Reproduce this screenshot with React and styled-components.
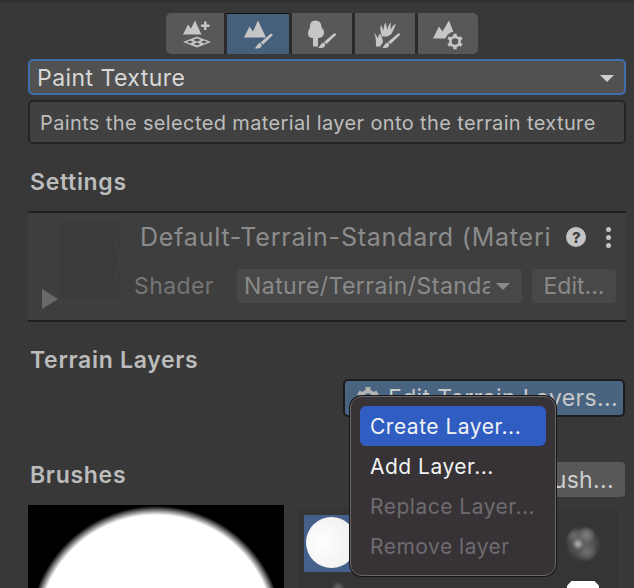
import React from 'react';
import styled, { createGlobalStyle } from 'styled-components';

const Global = createGlobalStyle`
  html, body {
    margin: 0;
    padding: 0;
    height: 588px;
    overflow: hidden;
    background: #383838;
  }
`;

const Page = styled.div`
  position: relative;
  width: 634px;
  height: 588px;
  overflow: hidden;
  box-sizing: border-box;
  padding: 13px 8px 0 28px;
  background: #383838;
  border-top: 2px solid #303030;
  font-family: Inter, "Liberation Sans", sans-serif;
  color: #c4c4c4;
`;

const Toolbar = styled.div`
  display: flex;
  width: 312px;
  height: 41px;
  margin: -2px 0 0 138px;
  gap: 3px;
  border-radius: 5px;
  background: #2a2a2a;
`;

const ToolButton = styled.div`
  flex: ${props => props.$grow} 0 0;
  display: flex;
  align-items: center;
  justify-content: center;
  box-sizing: border-box;
  background: ${props => (props.$active ? '#46607c' : '#585858')};
  border-top: ${props => (props.$active ? '1px solid #111' : '0')};
  border-radius: ${props => props.$radius || '0'};
`;

const Select = styled.div`
  display: flex;
  align-items: center;
  justify-content: space-between;
  box-sizing: border-box;
  height: 36px;
  margin-top: 5px;
  padding: 2px 10px 0 7px;
  border: 2px solid #3d6faf;
  border-radius: 5px;
  background: #515151;
  color: #d8d8d8;
  font-size: 23px;
  letter-spacing: 0.45px;
  line-height: 1;
`;

const Caret = styled.span`
  display: block;
  width: 0;
  height: 0;
  border-left: ${props => props.$size}px solid transparent;
  border-right: ${props => props.$size}px solid transparent;
  border-top: ${props => props.$size}px solid ${props => props.$color};
`;

const HelpBox = styled.div`
  display: flex;
  align-items: center;
  box-sizing: border-box;
  height: 44px;
  margin-top: 5px;
  padding: 2px 10px 0;
  border: 2px solid #242424;
  border-radius: 5px;
  background: #414141;
  font-size: 20px;
  letter-spacing: 0.37px;
  color: #bdbdbd;
  white-space: nowrap;
`;

const SectionTitle = styled.div`
  margin-top: ${props => props.$top}px;
  margin-left: 2px;
  height: 28px;
  line-height: 28px;
  font-size: 23px;
  font-weight: 600;
  letter-spacing: 0.7px;
  color: #bcbcbc;
`;

const Material = styled.div`
  position: relative;
  display: flex;
  box-sizing: border-box;
  height: 111px;
  margin-top: 15px;
  border-top: 2px solid #1f1f1f;
  border-bottom: 2px solid #1f1f1f;
  background: #3e3e3e;
`;

const Preview = styled.div`
  position: relative;
  flex: 0 0 106px;
`;

const PreviewSwatch = styled.div`
  position: relative;
  width: 62px;
  height: 78px;
  margin: 8px 0 0 32px;
  background: #3c3c3c;

  &::after {
    content: '';
    position: absolute;
    right: 2px;
    top: 10px;
    width: 40px;
    height: 58px;
    border-right: 1px solid #444;
    border-radius: 50%;
  }
`;

const PlayArrow = styled.span`
  position: absolute;
  left: 14px;
  top: 76px;
  width: 0;
  height: 0;
  border-top: 10px solid transparent;
  border-bottom: 10px solid transparent;
  border-left: 16px solid #696969;
`;

const MaterialBody = styled.div`
  flex: 1;
  display: flex;
  flex-direction: column;
  min-width: 0;
`;

const MaterialHead = styled.div`
  display: flex;
  align-items: center;
  height: 48px;
  margin-left: 6px;
  font-size: 25px;
  letter-spacing: 0.78px;
  color: #8c8c8c;
  white-space: nowrap;
`;

const HelpIcon = styled.span`
  display: flex;
  align-items: center;
  justify-content: center;
  width: 20px;
  height: 20px;
  margin-left: 15px;
  border-radius: 50%;
  background: #c4c4c4;
  color: #3e3e3e;
  font-size: 15px;
  font-weight: 800;
  letter-spacing: 0;
`;

const Dots = styled.span`
  display: flex;
  flex-direction: column;
  gap: 3px;
  margin-left: 20px;
`;

const Dot = styled.span`
  width: 5px;
  height: 5px;
  border-radius: 50%;
  background: #c4c4c4;
`;

const ShaderRow = styled.div`
  display: flex;
  align-items: center;
  height: 40px;
  margin-top: 5px;
  font-size: 23px;
  letter-spacing: 0.4px;
  color: #757575;
`;

const ShaderLabel = styled.span`
  width: 103px;
`;

const ShaderSelect = styled.div`
  display: flex;
  align-items: center;
  justify-content: space-between;
  box-sizing: border-box;
  width: 285px;
  height: 34px;
  padding: 0 12px 0 7px;
  border-radius: 4px;
  background: #484848;
  color: #8a8a8a;
  font-size: 23px;
  letter-spacing: 0.45px;
  overflow: hidden;
`;

const ShaderName = styled.span`
  width: 246px;
  overflow: hidden;
  white-space: nowrap;
`;

const EditButton = styled.div`
  display: flex;
  align-items: center;
  justify-content: center;
  width: 84px;
  height: 34px;
  margin-left: 10px;
  border-radius: 4px;
  background: #484848;
  color: #8a8a8a;
  font-size: 23px;
  letter-spacing: 0;
`;

const ButtonRow = styled.div`
  display: flex;
  justify-content: flex-end;
`;

const LayersButton = styled.div`
  display: flex;
  align-items: center;
  box-sizing: border-box;
  width: 282px;
  height: 38px;
  margin: 5px 1px 0 0;
  padding-left: 11px;
  border: 2px solid #1c1c1c;
  border-radius: 5px;
  background: #496480;
  color: #c8c8c8;
  font-size: 23px;
  letter-spacing: 0.35px;
  white-space: nowrap;
`;

const GearMark = styled.svg`
  flex: none;
  margin-right: 8px;
`;

const BrushHead = styled.div`
  display: flex;
  align-items: flex-start;
  justify-content: space-between;
  height: 36px;
  margin-top: 44px;
`;

const BrushTitle = styled(SectionTitle)`
  margin-top: 0;
`;

const BrushButton = styled.div`
  display: flex;
  align-items: center;
  justify-content: flex-end;
  box-sizing: border-box;
  width: 160px;
  height: 35px;
  margin: 1px 1px 0 0;
  padding-right: 11px;
  border-radius: 4px;
  background: #585858;
  color: #cfcfcf;
  font-size: 23px;
  letter-spacing: 0.35px;
`;

const BrushArea = styled.div`
  display: flex;
  gap: 14px;
  margin-top: 8px;
`;

const BigBrush = styled.div`
  flex: 0 0 256px;
  height: 256px;
  background: radial-gradient(circle at 50% 50%, #fff 0, #fff 118px, #000 127px);
`;

const BrushGrid = styled.div`
  flex: none;
  display: grid;
  box-sizing: border-box;
  width: 320px;
  height: 100px;
  grid-template-columns: repeat(5, 54px);
  grid-auto-rows: 57px;
  column-gap: 9px;
  row-gap: 9px;
  margin-top: 4px;
  padding: 6px 0 0 6px;
  background: #353535;
`;

const BrushCell = styled.div`
  display: flex;
  align-items: ${props => (props.$top ? 'flex-start' : 'center')};
  justify-content: center;
  background: ${props => (props.$active ? '#46608c' : 'transparent')};
`;

const HardDot = styled.div`
  width: 51px;
  height: 51px;
  margin: -2px 0 0 1px;
  border-radius: 50%;
  background: radial-gradient(circle at 30% 50%, #fff 0, #ececec 100%);
`;

const Cloud = styled.div`
  width: 36px;
  height: 36px;
  border-radius: 50%;
  background:
    radial-gradient(circle at 36% 50%, #b5b5b5 0, transparent 20%),
    radial-gradient(circle at 60% 25%, #808080 0, transparent 26%),
    radial-gradient(circle at 25% 28%, #6c6c6c 0, transparent 24%),
    radial-gradient(circle at 62% 72%, #707070 0, transparent 28%),
    radial-gradient(circle at 50% 50%, #5f5f5f 0, #4f4f4f 45%, transparent 72%);
`;

const Chisel = styled.div`
  width: 32px;
  height: 24px;
  background: #fff;
  clip-path: polygon(14% 0, 86% 0, 100% 20%, 100% 100%, 0 100%, 0 20%);
`;

const FaintMark = styled.div`
  width: 14px;
  height: 14px;
  margin-left: 14px;
  border-radius: 50%;
  background: radial-gradient(circle, #6a6a6a 0, transparent 70%);
`;

const Menu = styled.div`
  position: absolute;
  left: 350px;
  top: 394px;
  display: flex;
  flex-direction: column;
  box-sizing: border-box;
  width: 206px;
  height: 180px;
  padding: 9px 9px 0;
  border: 1px solid #6a686a;
  border-radius: 12px;
  background: #363236;
  box-shadow: 0 0 0 1px #161616;
  font-size: 21px;
  letter-spacing: 0.5px;
`;

const MenuItem = styled.div`
  display: flex;
  align-items: center;
  height: 40px;
  padding-left: 10px;
  border-radius: 6px;
  background: ${props => (props.$selected ? '#2f5dc2' : 'transparent')};
  color: ${props => (props.$disabled ? '#6e6b6e' : '#f2f2f2')};
  white-space: nowrap;
`;

const Brush = ({ x, y }) => (
  <g transform={`translate(${x} ${y})`}>
    <path d="M16.5 0 L18.5 1.5 L8.5 11 L6 9 Z" />
    <path d="M5 9.5 C7.5 10 8 12.5 6 14 C4.5 15.3 2 15.3 0 14.8 C2 14 2.5 10.5 5 9.5 Z" />
  </g>
);

const Gear = ({ x, y, bg }) => (
  <g transform={`translate(${x} ${y})`}>
    {bg && <circle r="10" fill={bg} />}
    <circle r="4.6" fill="none" stroke="currentColor" strokeWidth="2.6" />
    {[0, 60, 120, 180, 240, 300].map(angle => (
      <rect key={angle} x="-1.7" y="-7.8" width="3.4" height="3" fill="currentColor" transform={`rotate(${angle})`} />
    ))}
  </g>
);

// viewBox holds page coordinates so the shapes can be read off the reference
const IconFrame = ({ left, children }) => (
  <svg width="36" height="32" viewBox={`${left} 17.5 36 32`} fill="#c6c6c6" color="#c6c6c6">
    {children}
  </svg>
);

const tools = [
  {
    grow: 58,
    radius: '5px 0 0 5px',
    icon: (
      <IconFrame left={177}>
        <path d="M183 34 L188 24 L191 28 L195 20 L201.5 34 Z" />
        <path d="M204 21h2.5v3h3v2.5h-3v3H204v-3h-3v-2.5h3z" />
        <path
          fillRule="evenodd"
          d="M197 36 L211 41.5 L197 47 L183 41.5 Z M197 37.8 L201 39.6 L197 41.2 L193 39.6 Z M190 40.1 L193.3 41.5 L190 42.9 L186.7 41.5 Z M204 40.1 L207.3 41.5 L204 42.9 L200.7 41.5 Z M197 42.1 L200.6 43.5 L197 45.1 L193.4 43.5 Z"
        />
      </IconFrame>
    ),
  },
  {
    grow: 62,
    active: true,
    icon: (
      <IconFrame left={238}>
        <path d="M242 37 L247.5 26 L251 31 L256 20 L264 37 Z" />
        <Brush x={252.5} y={33} />
      </IconFrame>
    ),
  },
  {
    grow: 60,
    icon: (
      <IconFrame left={302}>
        <path d="M313.5 20 C317.5 20 319.5 23 319.5 27 C321.5 29 322.5 31 322 33 C321.5 36 319 37.5 316 37.5 L316 46 L311 46 L311 37.5 C308 37.5 306 36 306 33 C306 30.5 307 29 308 27 C307.5 23 309.5 20 313.5 20 Z" />
        <Brush x={316} y={32.5} />
      </IconFrame>
    ),
  },
  {
    grow: 60,
    icon: (
      <IconFrame left={366}>
        <path d="M381 36 C379 31 379 27 380 24 C381 27 382 29 383 30 C382 27 383 24 385 22 C385 25 386 28 386.5 29.5 C386.5 26 388 24 390 22 C389.5 25 389.5 28 390 29 C391 26 393 24 395 23 C393.5 27 392 31 390 34 L386 36 Z" />
        <path d="M373 32 C375 34 376 36 377 38 C377 36 378 34 379 33 C381 36 382 40 382 42 L379 46 L375 46 C375 41 375 36 373 32 Z" />
        <Brush x={381} y={32.5} />
      </IconFrame>
    ),
  },
  {
    grow: 60,
    radius: '0 5px 5px 0',
    icon: (
      <IconFrame left={430}>
        <path d="M433 38 L439 26 L442.5 31 L449 20 L456 38 Z" />
        <Gear x={455} y={41} bg="#585858" />
      </IconFrame>
    ),
  },
];

const App = () => (
  <Page>
    <Global />
    <Toolbar>
      {tools.map((tool, i) => (
        <ToolButton key={i} $grow={tool.grow} $active={tool.active} $radius={tool.radius}>
          {tool.icon}
        </ToolButton>
      ))}
    </Toolbar>

    <Select>
      Paint Texture
      <Caret $size={7} $color="#cfcfcf" />
    </Select>
    <HelpBox>Paints the selected material layer onto the terrain texture</HelpBox>

    <SectionTitle $top={24}>Settings</SectionTitle>
    <Material>
      <Preview>
        <PreviewSwatch />
        <PlayArrow />
      </Preview>
      <MaterialBody>
        <MaterialHead>
          Default-Terrain-Standard (Materi
          <HelpIcon>?</HelpIcon>
          <Dots>
            <Dot />
            <Dot />
            <Dot />
          </Dots>
        </MaterialHead>
        <ShaderRow>
          <ShaderLabel>Shader</ShaderLabel>
          <ShaderSelect>
            <ShaderName>Nature/Terrain/Standard</ShaderName>
            <Caret $size={7} $color="#8a8a8a" />
          </ShaderSelect>
          <EditButton>Edit...</EditButton>
        </ShaderRow>
      </MaterialBody>
    </Material>

    <SectionTitle $top={24}>Terrain Layers</SectionTitle>
    <ButtonRow>
      <LayersButton>
        <GearMark width="24" height="24" viewBox="-8.5 -8.5 17 17" color="#b4b4b4">
          <Gear x={0} y={0} />
        </GearMark>
        Edit Terrain Layers...
      </LayersButton>
    </ButtonRow>

    <BrushHead>
      <BrushTitle>Brushes</BrushTitle>
      <BrushButton>Edit Brush...</BrushButton>
    </BrushHead>
    <BrushArea>
      <BigBrush />
      <BrushGrid>
        <BrushCell $active>
          <HardDot />
        </BrushCell>
        <BrushCell />
        <BrushCell />
        <BrushCell />
        <BrushCell>
          <Cloud />
        </BrushCell>
        <BrushCell $top>
          <FaintMark />
        </BrushCell>
        <BrushCell />
        <BrushCell />
        <BrushCell />
        <BrushCell $top>
          <Chisel />
        </BrushCell>
      </BrushGrid>
    </BrushArea>

    <Menu>
      <MenuItem $selected>Create Layer...</MenuItem>
      <MenuItem>Add Layer...</MenuItem>
      <MenuItem $disabled>Replace Layer...</MenuItem>
      <MenuItem $disabled>Remove layer</MenuItem>
    </Menu>
  </Page>
);

export default App;
